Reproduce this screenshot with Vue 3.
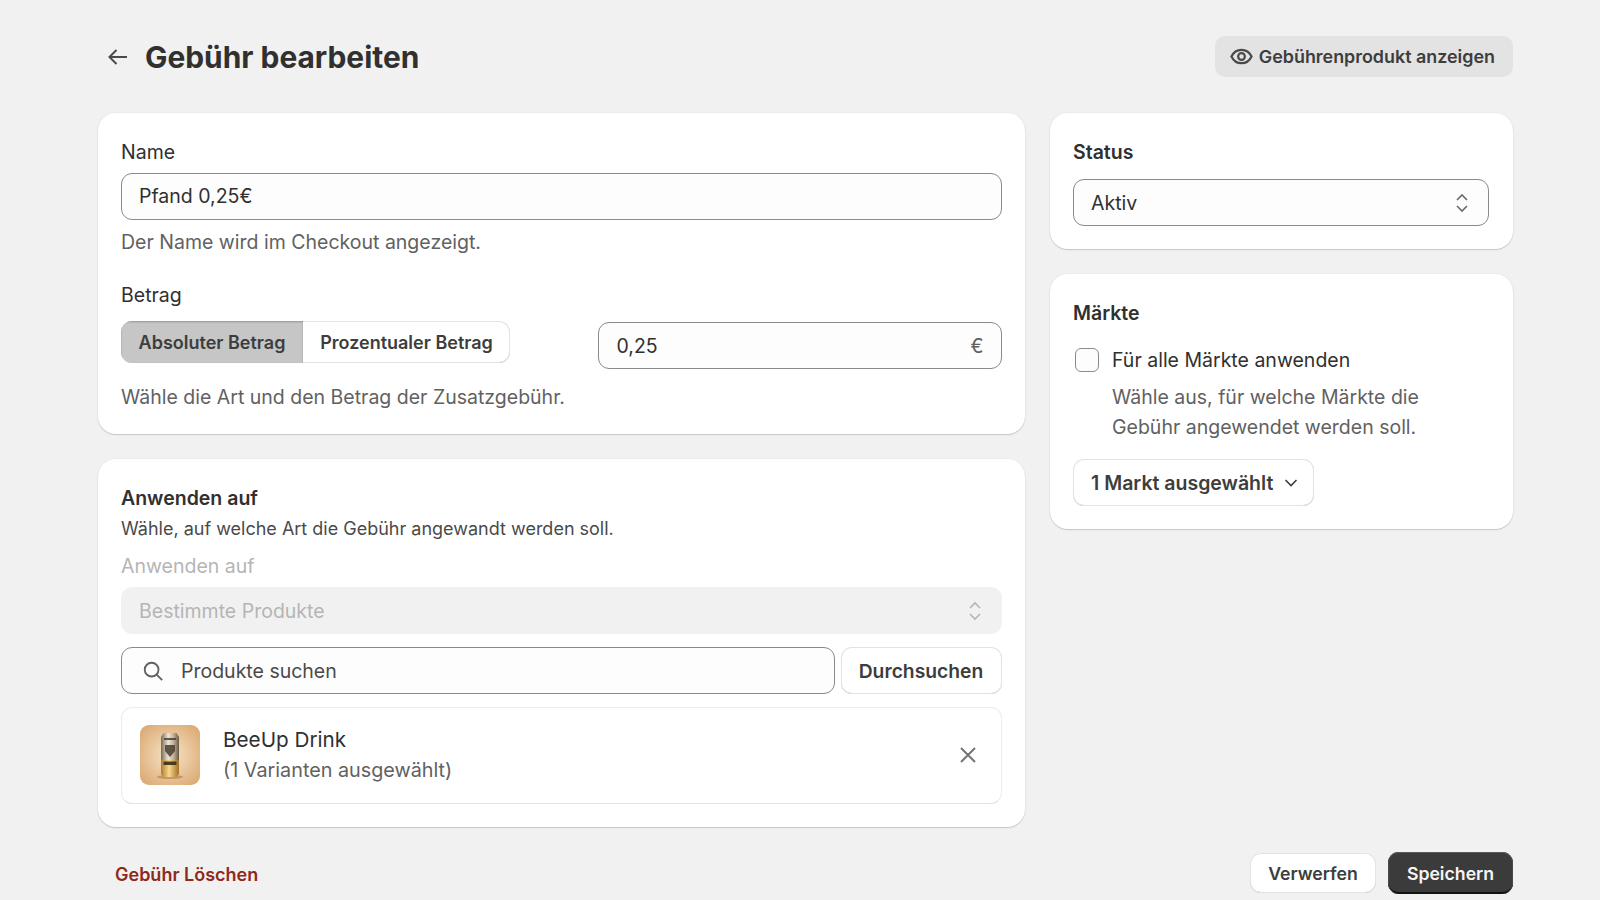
<script setup>
const segments = [
  { label: 'Absoluter Betrag', active: true },
  { label: 'Prozentualer Betrag', active: false },
]
</script>

<template>
  <div class="page">
    <header class="top">
      <div class="title-group">
        <svg class="back" viewBox="0 0 24 24" aria-hidden="true">
          <path d="M21 12H3.5M10.5 5l-7 7 7 7" />
        </svg>
        <h1>Gebühr bearbeiten</h1>
      </div>
      <button class="view-btn">
        <svg class="eye" viewBox="0 0 24 24" aria-hidden="true">
          <path d="M1.5 12c2.2-4.6 6-7 10.500-7s8.300 2.400 10.500 7c-2.200 4.600-6 7-10.500 7s-8.300-2.400-10.500-7z" />
          <circle cx="12" cy="12" r="3.500" />
        </svg>
        Gebührenprodukt anzeigen
      </button>
    </header>

    <main class="columns">
      <section class="col-main">
        <div class="card card-fee">
          <label class="label">Name</label>
          <div class="input name-input">Pfand 0,25€</div>
          <p class="help help-name">Der Name wird im Checkout angezeigt.</p>
          <label class="label label-amount">Betrag</label>
          <div class="amount-row">
            <div class="segments">
              <span v-for="s in segments" :key="s.label" class="segment" :class="{ active: s.active }">{{ s.label }}</span>
            </div>
            <div class="input amount-input"><span>0,25</span><span class="currency">€</span></div>
          </div>
          <p class="help help-amount">Wähle die Art und den Betrag der Zusatzgebühr.</p>
        </div>

        <div class="card card-apply">
          <h2>Anwenden auf</h2>
          <p class="sub">Wähle, auf welche Art die Gebühr angewandt werden soll.</p>
          <label class="label disabled-label">Anwenden auf</label>
          <div class="input select disabled">
            <span>Bestimmte Produkte</span>
            <svg class="updown" viewBox="0 0 16 24" aria-hidden="true"><path d="M3 9l5-5 5 5M3 15l5 5 5-5" /></svg>
          </div>
          <div class="search-row">
            <div class="input search">
              <svg class="search-icon" viewBox="0 0 24 24" aria-hidden="true">
                <circle cx="10.500" cy="10.500" r="7.500" /><path d="M16 16l6 6" />
              </svg>
              <span>Produkte suchen</span>
            </div>
            <button class="btn browse">Durchsuchen</button>
          </div>
          <div class="item">
            <svg class="thumb" viewBox="0 0 60 60" aria-hidden="true">
              <defs>
                <radialGradient id="bg" cx="50%" cy="50%" r="72%">
                  <stop offset="0" stop-color="#f8e6c9" />
                  <stop offset="1" stop-color="#d8a26a" />
                </radialGradient>
                <linearGradient id="can" x1="0" x2="1" y1="0" y2="0">
                  <stop offset="0" stop-color="#7a6a58" />
                  <stop offset=".4" stop-color="#ece4d8" />
                  <stop offset=".7" stop-color="#c2b199" />
                  <stop offset="1" stop-color="#665542" />
                </linearGradient>
                <linearGradient id="canlow" x1="0" x2="1" y1="0" y2="0">
                  <stop offset="0" stop-color="#b07a2a" />
                  <stop offset=".45" stop-color="#f8d88e" />
                  <stop offset="1" stop-color="#a06f24" />
                </linearGradient>
                <filter id="soft" x="-10%" y="-10%" width="120%" height="120%">
                  <feGaussianBlur stdDeviation=".7" />
                </filter>
              </defs>
              <rect width="60" height="60" rx="9" fill="url(#bg)" />
              <g filter="url(#soft)">
                <ellipse cx="30" cy="52" rx="13" ry="2" fill="#a97439" opacity=".55" />
                <path d="M21 12l2.500-4h13L39 12v24H21z" fill="url(#can)" />
                <path d="M21 35h18v14l-2.500 3h-13L21 49z" fill="url(#canlow)" />
                <path d="M24 13h12v2H24zM25 20h10v6l-5 6-5-6z" fill="#4a3d2e" opacity=".85" />
                <rect x="23.500" y="36.500" width="13" height="3.500" fill="#3a2d1c" opacity=".9" />
              </g>
            </svg>
            <div class="item-text">
              <div class="item-name">BeeUp Drink</div>
              <div class="item-sub">(1 Varianten ausgewählt)</div>
            </div>
            <svg class="close" viewBox="0 0 16 16" aria-hidden="true"><path d="M1 1l14 14M15 1L1 15" /></svg>
          </div>
        </div>
      </section>

      <aside class="col-side">
        <div class="card card-status">
          <h2>Status</h2>
          <div class="input select status-select">
            <span>Aktiv</span>
            <svg class="updown" viewBox="0 0 16 24" aria-hidden="true"><path d="M3 9l5-5 5 5M3 15l5 5 5-5" /></svg>
          </div>
        </div>

        <div class="card card-markets">
          <h2>Märkte</h2>
          <div class="check-row">
            <span class="checkbox"></span>
            <span>Für alle Märkte anwenden</span>
          </div>
          <p class="check-help">Wähle aus, für welche Märkte die<br />Gebühr angewendet werden soll.</p>
          <button class="btn market-btn">
            <span>1 Markt ausgewählt</span>
            <svg class="chev" viewBox="0 0 16 16" aria-hidden="true"><path d="M2.500 5l5.500 5.500L13.500 5" /></svg>
          </button>
        </div>
      </aside>
    </main>

    <footer class="bottom">
      <a class="delete">Gebühr Löschen</a>
      <div class="actions">
        <button class="btn discard">Verwerfen</button>
        <button class="btn save">Speichern</button>
      </div>
    </footer>
  </div>
</template>

<style>
html, body { margin: 0; background: #f1f1f1; }
</style>

<style scoped>
* { box-sizing: border-box; }
.page {
  width: 1600px;
  height: 900px;
  overflow: hidden;
  padding: 36px 87px 0 98px;
  background: #f1f1f1;
  color: #303030;
  font-family: Inter, "Liberation Sans", sans-serif;
  font-size: 19.500px;
  line-height: 26px;
}
h1, h2, p { margin: 0; }
button { font-family: inherit; cursor: pointer; }

.top { display: flex; justify-content: space-between; align-items: center; height: 41px; }
.title-group { display: flex; align-items: center; }
.back { width: 24px; height: 24px; margin: 0 15px 0 8px; fill: none; stroke: #4a4a4a; stroke-width: 2; }
h1 { font-size: 29.900px; font-weight: 700; line-height: 41px; padding-top: 1px; }
.view-btn {
  display: flex; align-items: center; gap: 6px;
  height: 41px; padding: 0 18px 0 15px;
  border: 0; border-radius: 10px;
  background: #e3e3e3; color: #3d3d3d;
  font-size: 17.900px; font-weight: 600;
}
.eye { width: 23px; height: 23px; fill: none; stroke: #4a4a4a; stroke-width: 2.300; }

.columns { display: grid; grid-template-columns: 926.500px 462.500px; gap: 25.500px; margin-top: 36px; align-items: start; }
.col-main { display: flex; flex-direction: column; gap: 25px; }
.col-side { display: flex; flex-direction: column; gap: 25px; }

.card {
  background: #fff;
  border-radius: 18px;
  padding: 0 23px;
  box-shadow: 0 1px 0 rgba(0,0,0,.07), 0 1px 2px rgba(0,0,0,.1), 0 0 0 1px rgba(0,0,0,.02);
}
.card-fee { height: 321px; padding-top: 26px; }
.card-apply { height: 368px; padding-top: 26px; }
.card-status { height: 136px; padding: 26px 24px 0 23px; }
.card-markets { height: 254.500px; padding: 26px 24px 0 23px; }

.label { display: block; }
h2 { font-size: 19.500px; font-weight: 600; line-height: 26px; }

.input {
  display: flex; align-items: center;
  height: 47px; padding: 0 17px;
  background: #fdfdfd;
  border: 1.500px solid #8a8a8a;
  border-radius: 11px;
}
.name-input { margin-top: 7.500px; }
.help { color: #616161; }
.help-name { margin-top: 9.500px; }
.label-amount { margin-top: 27px; }

.amount-row { display: flex; justify-content: space-between; align-items: flex-start; margin-top: 13px; }
.segments {
  display: flex; width: 389px; height: 42px;
  border-radius: 11px;
  overflow: hidden;
  background: #fff;
  box-shadow: inset 0 0 0 1px #e3e3e3, inset 0 -1px 0 #b5b5b5;
}
.segment { display: flex; align-items: center; justify-content: center; padding-top: 2px; font-size: 18px; font-weight: 600; flex: 1; color: #3d3d3d; }
.segment.active { flex: 0 0 182px; background: #c6c6c6; box-shadow: inset 0 1px 2px rgba(0,0,0,.25); }
.amount-input { width: 404px; margin-top: 1px; padding-left: 18px; justify-content: space-between; }
.currency { color: #616161; }
.help-amount { margin-top: 15px; }

.sub { margin-top: 5px; font-size: 18px; color: #4a4a4a; }
.disabled-label { margin-top: 11px; color: #b5b5b5; }
.select { justify-content: space-between; }
.updown { width: 16px; height: 24px; fill: none; stroke: #6b6b6b; stroke-width: 1.600; margin-right: 1px; }
.disabled { margin-top: 8px; background: #f1f1f1; border-color: #f1f1f1; color: #b5b5b5; }
.disabled .updown { stroke: #b5b5b5; }

.search-row { display: flex; justify-content: space-between; margin-top: 13px; }
.search { width: 714px; color: #4a4a4a; padding-left: 20px; }
.search-icon { width: 22px; height: 22px; margin-right: 17px; fill: none; stroke: #616161; stroke-width: 2; }
.btn {
  border: 0; border-radius: 11px; background: #fff; color: #3d3d3d;
  font-size: 19.500px; font-weight: 600;
  box-shadow: inset 0 0 0 1px #e3e3e3, inset 0 -1px 0 #b5b5b5;
}
.browse { width: 161px; height: 47px; font-size: 19.300px; }

.item {
  display: flex; align-items: center;
  height: 96.500px; margin-top: 13px; padding: 0 18px 1px;
  border: 1px solid #ececec; border-bottom-color: #e3e3e3;
  border-radius: 11px;
}
.thumb { width: 60px; height: 60px; flex: none; }
.item-text { flex: 1; margin-left: 23px; }
.item-name { font-size: 20.700px; line-height: 30px; }
.item-sub { font-size: 19.800px; line-height: 30px; color: #616161; }
.close { width: 16px; height: 16px; margin-right: 7px; fill: none; stroke: #757575; stroke-width: 2; }

.status-select { margin-top: 14px; }

.check-row { display: flex; align-items: center; margin-top: 21px; margin-left: 2px; }
.checkbox {
  width: 24px; height: 24px; margin-right: 13px;
  border: 1.500px solid #8a8a8a; border-radius: 6px; background: #fdfdfd;
}
.check-help { margin: 8.500px 0 0 39px; line-height: 30px; color: #616161; }
.market-btn {
  display: flex; align-items: center; justify-content: space-between;
  width: 241px; height: 47px; padding: 0 15px 0 18px; margin-top: 17.500px;
}
.chev { width: 16px; height: 16px; fill: none; stroke: #3d3d3d; stroke-width: 1.600; }

.bottom { display: flex; justify-content: space-between; align-items: center; margin-top: 25px; height: 42px; }
.delete { margin: 4px 0 0 17px; font-size: 18px; font-weight: 600; color: #8e2a1a; }
.actions { display: flex; gap: 12px; align-items: center; }
.discard { width: 126px; height: 40px; font-size: 17.700px; }
.save {
  width: 125px; height: 42px; font-size: 17.700px; color: #f5f5f5; background: #3b3b3b;
  box-shadow: inset 0 1px 0 #5a5a5a, inset 1px 0 0 #4a4a4a, inset -1px 0 0 #4a4a4a, inset 0 -2px 0 #111;
}
</style>
